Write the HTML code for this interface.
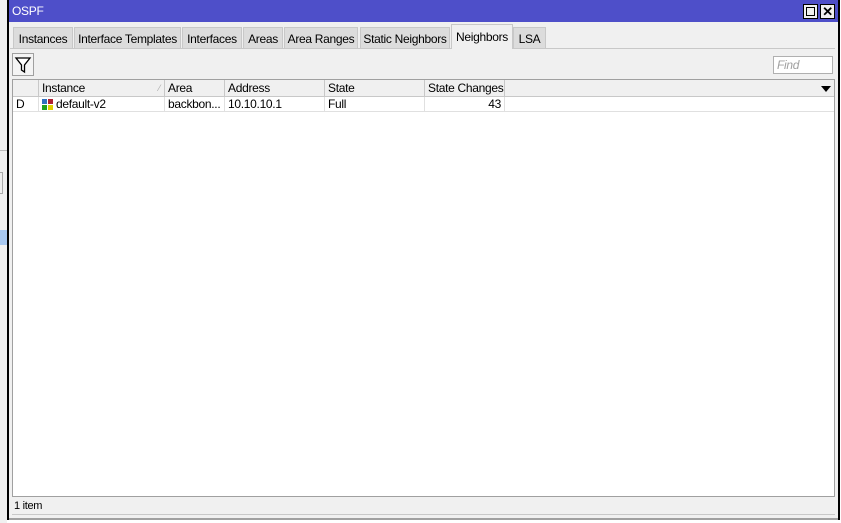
<!DOCTYPE html>
<html><head><style>
*{margin:0;padding:0;box-sizing:border-box}
body{width:841px;height:523px;overflow:hidden;background:#fff;font-family:"Liberation Sans",sans-serif;font-size:12px;letter-spacing:-0.3px;color:#000;position:relative;white-space:nowrap}
.a{position:absolute}
.tab{position:absolute;top:27px;height:22px;background:#dcdcdc;border:1px solid #c8c8c8;border-bottom:none;line-height:22px;text-align:center;font-size:12px;overflow:hidden}
.th{position:absolute;top:0;height:16px;border-right:1px solid #c8c8c8;line-height:16px;padding-left:3px;overflow:hidden}
.td{position:absolute;top:0;height:15px;border-right:1px solid #e0e0e0;line-height:15px;padding-left:3px}
</style></head><body>
<div class="a" style="left:0;top:0;width:7px;height:523px;background:#f0f0f0"></div>
<div class="a" style="left:0;top:150px;width:7px;height:1px;background:#bbb"></div>
<div class="a" style="left:0;top:172px;width:3px;height:22px;border:1px solid #aaa;border-left:none"></div>
<div class="a" style="left:0;top:230px;width:7px;height:15px;background:#a8c8f0"></div>
<div class="a" style="left:7px;top:0;width:2px;height:520px;background:#000"></div>
<div class="a" style="left:838px;top:0;width:2px;height:520px;background:#000"></div>
<div class="a" style="left:9px;top:0;width:829px;height:520px;background:#f0f0f0;border-bottom:2px solid #a0a0a0"></div>
<div class="a" style="left:9px;top:0;width:829px;height:22px;background:#4e4fc9;color:#fff;line-height:23px;padding-left:3px;font-size:12px">OSPF</div>
<div class="a" style="left:803px;top:4px;width:15px;height:15px;background:#f0f0f0;border:1px solid #000"><div class="a" style="left:2px;top:2px;width:9px;height:9px;border:1px solid #000"></div></div>
<div class="a" style="left:820px;top:4px;width:15px;height:15px;background:#f0f0f0;border:1px solid #000;font-weight:bold;line-height:13px;text-align:center;font-size:13px">✕</div>
<div class="tab" style="left:13px;width:60px">Instances</div>
<div class="tab" style="left:74px;width:107px">Interface Templates</div>
<div class="tab" style="left:182px;width:60px">Interfaces</div>
<div class="tab" style="left:243px;width:40px">Areas</div>
<div class="tab" style="left:284px;width:74px">Area Ranges</div>
<div class="tab" style="left:360px;width:90px">Static Neighbors</div>
<div class="tab" style="left:451px;width:62px;top:24px;height:25px;background:#f0f0f0;line-height:24px">Neighbors</div>
<div class="tab" style="left:513px;width:33px">LSA</div>
<div class="a" style="left:10px;top:48px;width:441px;height:1px;background:#c8c8c8"></div>
<div class="a" style="left:513px;top:48px;width:322px;height:1px;background:#c8c8c8"></div>
<div class="a" style="left:12px;top:53px;width:22px;height:23px;border:1px solid #a0a0a0;background:#f4f4f4">
<svg width="20" height="21" viewBox="0 0 20 21"><path d="M3 4H17L11.5 11V18L8.5 16V11Z" fill="#fff" stroke="#000" stroke-width="1.3"/></svg></div>
<div class="a" style="left:773px;top:56px;width:60px;height:18px;border:1px solid #b0b0b0;background:#fff;color:#a0a0a0;font-style:italic;padding-left:3px;line-height:16px">Find</div>
<div class="a" style="left:12px;top:79px;width:823px;height:418px;background:#fff;border:1px solid #a0a0a0">
 <div class="a" style="left:0;top:0;width:821px;height:17px;background:#f0f0f0;border-bottom:1px solid #c8c8c8">
  <div class="th" style="left:0;width:26px"></div>
  <div class="th" style="left:26px;width:126px">Instance<span style="position:absolute;right:4px;color:#aaa;font-size:9px">⁄</span></div>
  <div class="th" style="left:152px;width:60px">Area</div>
  <div class="th" style="left:212px;width:100px">Address</div>
  <div class="th" style="left:312px;width:100px">State</div>
  <div class="th" style="left:412px;width:80px">State Changes</div>
  <div class="a" style="left:808px;top:6px;width:0;height:0;border-left:5px solid transparent;border-right:5px solid transparent;border-top:6px solid #000"></div>
 </div>
 <div class="a" style="left:0;top:17px;width:821px;height:15px;border-bottom:1px solid #e0e0e0">
  <div class="td" style="left:0;width:26px">D</div>
  <div class="td" style="left:26px;width:126px;padding-left:17px">default-v2
   <div class="a" style="left:3px;top:2px;width:5px;height:5px;background:#3070c0"></div>
   <div class="a" style="left:9px;top:2px;width:5px;height:5px;background:#b02030"></div>
   <div class="a" style="left:3px;top:8px;width:5px;height:5px;background:#20a020"></div>
   <div class="a" style="left:9px;top:8px;width:5px;height:5px;background:#e0d000"></div></div>
  <div class="td" style="left:152px;width:60px">backbon...</div>
  <div class="td" style="left:212px;width:100px">10.10.10.1</div>
  <div class="td" style="left:312px;width:100px">Full</div>
  <div class="td" style="left:412px;width:80px;text-align:right;padding-right:3px">43</div>
 </div>
</div>
<div class="a" style="left:12px;top:497px;width:823px;height:18px;border-bottom:1px solid #c8c8c8;line-height:18px;padding-left:2px;font-size:11px">1 item</div>
</body></html>
